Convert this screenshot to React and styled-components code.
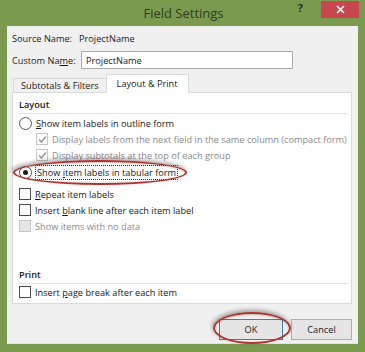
import React from 'react';
import styled, { createGlobalStyle } from 'styled-components';

const GlobalStyle = createGlobalStyle`
  html, body {
    margin: 0;
    padding: 0;
    background: #7b9a50;
  }
  body {
    font-family: "Open Sans", "Noto Sans", "Liberation Sans", sans-serif;
    font-size: 9.2px;
    color: #1a1a1a;
  }
`;

const Window = styled.div`
  width: 365px;
  height: 352px;
  box-sizing: border-box;
  background: #7b9a50;
  padding: 0 7px 8px 7px;
  display: flex;
  flex-direction: column;
  position: relative;
  overflow: hidden;
`;

const TitleBar = styled.div`
  height: 26px;
  display: flex;
  align-items: center;
  justify-content: center;
  position: relative;
  color: #2f3a22;
  font-size: 13px;
  padding-left: 2px;
`;

const TitleButtons = styled.div`
  position: absolute;
  right: -1px;
  top: 1px;
  display: flex;
  align-items: center;
  gap: 18px;
`;

const Help = styled.span`
  font-weight: 700;
  font-size: 11px;
  color: #26301c;
  margin-top: -4px;
`;

const Close = styled.div`
  width: 38px;
  height: 17px;
  background: #c8474f;
  display: flex;
  align-items: center;
  justify-content: center;
`;

const Body = styled.div`
  flex: 1;
  background: #f0f0f0;
  border-bottom: 1px solid #dfe6d6;
  padding: 0 6px 0 5px;
  display: flex;
  flex-direction: column;
`;

const FieldRow = styled.div`
  display: flex;
  align-items: center;
  height: ${p => p.h}px;
  margin-top: ${p => p.mt || 0}px;
  white-space: nowrap;
`;

const Label = styled.span`
  width: ${p => p.w}px;
  flex-shrink: 0;
`;

const Input = styled.div`
  width: 206px;
  height: 16px;
  border: 1px solid #ababab;
  background: #fff;
  display: flex;
  align-items: center;
  padding-left: 4px;
`;

const Tabs = styled.div`
  display: flex;
  align-items: flex-end;
  margin-top: 5px;
  padding-left: 1px;
  height: 19px;
  position: relative;
  z-index: 1;
  white-space: nowrap;
`;

const Tab = styled.div`
  height: ${p => (p.active ? 19 : 15)}px;
  box-sizing: border-box;
  padding: 0 ${p => (p.active ? 10 : 7)}px;
  display: flex;
  align-items: center;
  border: 1px solid #d9d9d9;
  border-bottom: 1px solid ${p => (p.active ? '#fff' : '#d9d9d9')};
  background: ${p => (p.active ? '#fff' : '#f0f0f0')};
  margin-left: ${p => (p.active ? -1 : 0)}px;
`;

const Panel = styled.div`
  height: 212px;
  margin-top: -1px;
  background: #fff;
  border: 1px solid #d9d9d9;
  box-sizing: border-box;
  padding: 2px 3px 0 6px;
  display: flex;
  flex-direction: column;
`;

const Heading = styled.div`
  font-weight: 600;
  height: 18px;
  display: flex;
  align-items: center;
  border-bottom: 1px solid #e3e3e3;
  margin-top: ${p => p.mt || 0}px;
`;

const Option = styled.div`
  display: flex;
  align-items: center;
  height: 16px;
  margin-top: ${p => p.mt || 0}px;
  padding-left: ${p => (p.indent ? 17 : 0)}px;
  color: ${p => (p.disabled ? '#8a8a8a' : '#1a1a1a')};
  white-space: nowrap;
`;

const Radio = styled.span`
  width: 11px;
  height: 11px;
  border: 1px solid #555;
  border-radius: 50%;
  background: #fff;
  margin-right: 4px;
  display: flex;
  align-items: center;
  justify-content: center;
  flex-shrink: 0;
  &::after {
    content: '';
    width: 5px;
    height: 5px;
    border-radius: 50%;
    background: ${p => (p.checked ? '#1e1e1e' : 'transparent')};
  }
`;

const Box = styled.span`
  width: 10px;
  height: 10px;
  border: 1px solid ${p => (p.disabled ? '#c6c6c6' : '#4d4d4d')};
  background: ${p => (p.filled ? '#e6e6e6' : '#fff')};
  margin-right: 4px;
  flex-shrink: 0;
  display: flex;
  align-items: center;
  justify-content: center;
`;

const Focus = styled.span`
  outline: 1px dotted #333;
  padding: 0 1px;
`;

const U = styled.span`
  text-decoration: underline;
  text-underline-offset: 1px;
`;

const Spacer = styled.div`
  flex: 1;
`;

const Buttons = styled.div`
  display: flex;
  justify-content: flex-end;
  gap: 8px;
  height: 21px;
  margin-bottom: 3px;
`;

const Button = styled.div`
  width: ${p => p.w}px;
  height: 21px;
  box-sizing: border-box;
  border: 1px solid ${p => (p.primary ? '#3c7fb1' : '#adadad')};
  background: #e5e5e5;
  display: flex;
  align-items: center;
  justify-content: center;
`;

const Ring = styled.div`
  position: absolute;
  left: ${p => p.x}px;
  top: ${p => p.y}px;
  width: ${p => p.w}px;
  height: ${p => p.h}px;
  border: 2.5px solid #b2312c;
  border-radius: 50%;
  box-sizing: border-box;
  box-shadow: -1px -2px 4px rgba(0,0,0,0.35), inset 0 1px 2px rgba(0,0,0,0.2);
  pointer-events: none;
`;

const Check = () => (
  <svg width="9" height="9" viewBox="0 0 9 9">
    <path d="M1.2 4.6 L3.5 7 L7.8 1.6" fill="none" stroke="#9a9a9a" strokeWidth="1.6" />
  </svg>
);

export default function App() {
  return (
    <>
      <GlobalStyle />
      <Window>
        <TitleBar>
          Field Settings
          <TitleButtons>
            <Help>?</Help>
            <Close>
              <svg width="9" height="9" viewBox="0 0 9 9">
                <path d="M1 1 L8 8 M8 1 L1 8" stroke="#fff" strokeWidth="1.6" />
              </svg>
            </Close>
          </TitleButtons>
        </TitleBar>
        <Body>
          <FieldRow h={18} mt={3}>
            <Label w={67}>Source Name:</Label>
            <span>ProjectName</span>
          </FieldRow>
          <FieldRow h={18} mt={4}>
            <Label w={69}>Custom Na<U>m</U>e:</Label>
            <Input>ProjectName</Input>
          </FieldRow>
          <Tabs>
            <Tab>Subtotals &amp; Filters</Tab>
            <Tab active>Layout &amp; Print</Tab>
          </Tabs>
          <Panel>
            <Heading>Layout</Heading>
            <Option mt={1}>
              <Radio />
              <span><U>S</U>how item labels in outline form</span>
            </Option>
            <Option indent disabled>
              <Box disabled><Check /></Box>
              Display labels from the next field in the same column (compact form)
            </Option>
            <Option indent disabled>
              <Box disabled><Check /></Box>
              Display subtotals at the top of each group
            </Option>
            <Option mt={1}>
              <Radio checked />
              <Focus>Show <U>i</U>tem labels in tabular form</Focus>
            </Option>
            <Option mt={6}>
              <Box />
              <span><U>R</U>epeat item labels</span>
            </Option>
            <Option>
              <Box />
              <span>Insert <U>b</U>lank line after each item label</span>
            </Option>
            <Option disabled>
              <Box disabled filled />
              Show items with no data
            </Option>
            <Heading mt={31}>Print</Heading>
            <Option mt={0}>
              <Box />
              <span>Insert <U>p</U>age break after each item</span>
            </Option>
          </Panel>
          <Spacer />
          <Buttons>
            <Button w={64} primary>OK</Button>
            <Button w={61}>Cancel</Button>
          </Buttons>
        </Body>
        <Ring x={13} y={160} w={174} h={25} />
        <Ring x={213} y={312} w={78} h={32} />
      </Window>
    </>
  );
}
